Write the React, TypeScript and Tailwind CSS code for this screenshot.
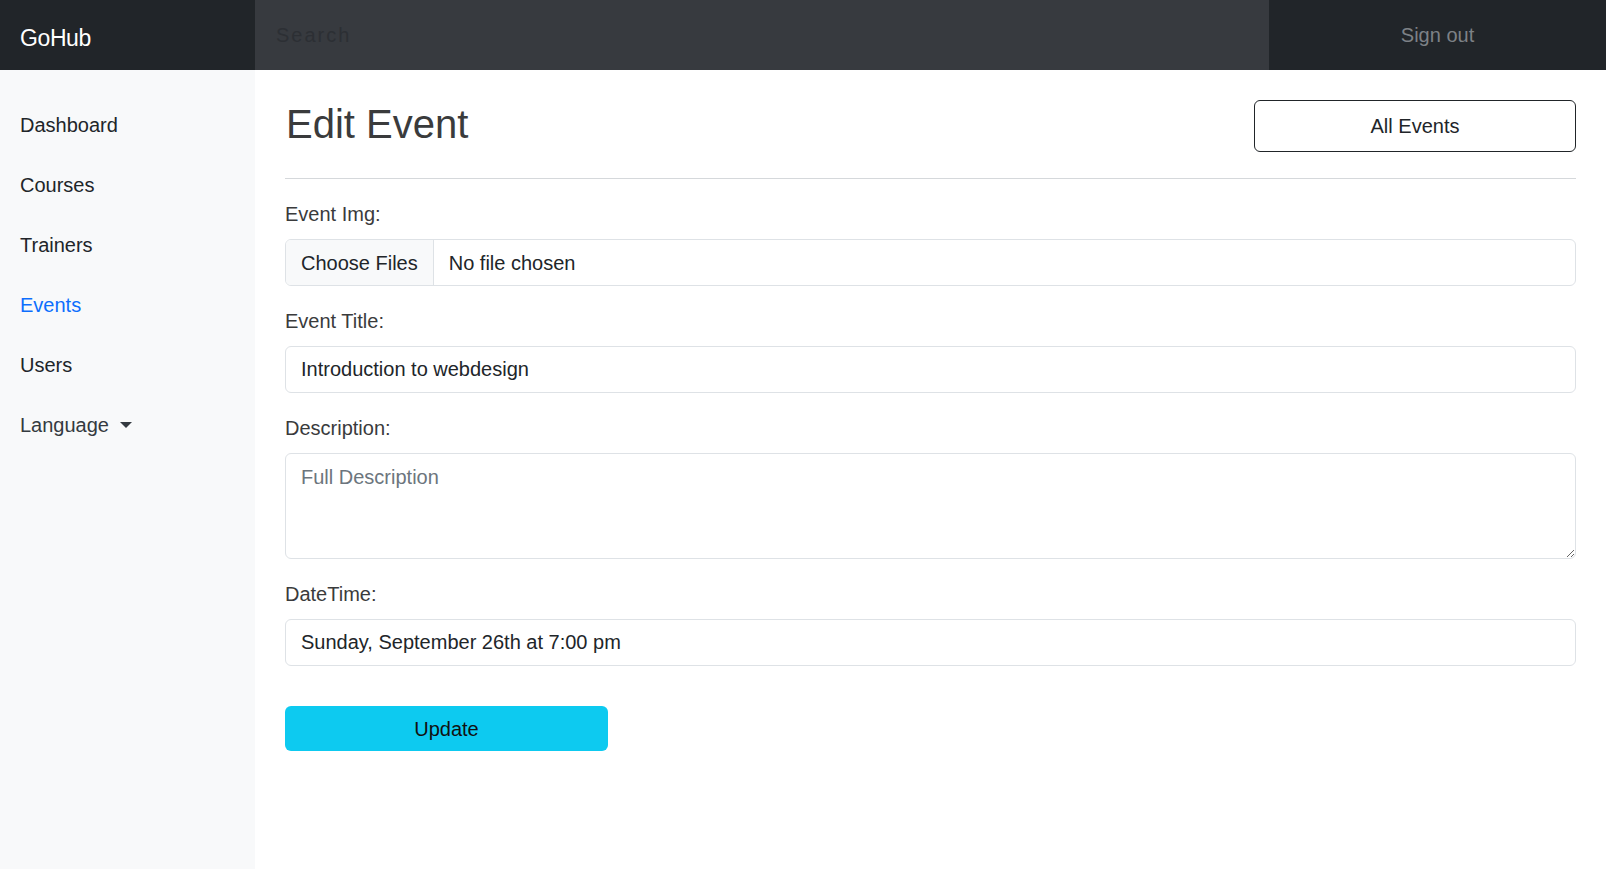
import { useState } from "react";

const navItems = [
  { label: "Dashboard", active: false },
  { label: "Courses", active: false },
  { label: "Trainers", active: false },
  { label: "Events", active: true },
  { label: "Users", active: false }
];

const inputCls =
  "block h-[47px] w-full rounded-[6px] border border-[#dee2e6] bg-white px-[15px] text-[20px] leading-[30px] text-[#212529] outline-none";

export default function App() {
  const [title, setTitle] = useState("Introduction to webdesign");
  const [when, setWhen] = useState("Sunday, September 26th at 7:00 pm");

  return (
    <div className="min-h-screen bg-white font-['Liberation_Sans',Arial,sans-serif] text-[#212529]">
      <header className="flex h-[70px] bg-[#212529]">
        <div className="flex w-[255px] shrink-0 items-center px-[20px] pt-[6px] text-[23px] tracking-[-0.4px] text-white">GoHub</div>
        <input
          placeholder="Search"
          className="h-full flex-1 bg-[#373a3f] px-[21px] text-[20px] tracking-[2px] text-white outline-none placeholder:text-[#2c2f34]"
        />
        <div className="flex w-[337px] shrink-0 items-center justify-center text-[20px] text-[#7d8186]">Sign out</div>
      </header>

      <div className="flex min-h-[799px]">
        <aside className="w-[255px] shrink-0 bg-[#f8f9fa] pt-[25px]">
          <nav className="flex flex-col">
            {navItems.map((item) => (
              <a
                key={item.label}
                className={`flex h-[60px] items-center px-[20px] text-[20px] ${item.active ? "text-[#0d6efd]" : "text-[#212529]"}`}
              >
                {item.label}
              </a>
            ))}
            <a className="flex h-[60px] items-center px-[20px] text-[20px] text-[#343a40]">
              Language
              <span className="ml-[11px] h-0 w-0 border-x-[6px] border-t-[6px] border-x-transparent border-t-[#343a40]" />
            </a>
          </nav>
        </aside>

        <main className="min-w-0 flex-1 px-[30px]">
          <div className="flex items-center justify-between border-b border-[#d5d8db] pt-[30px] pb-[26px]">
            <h1 className="mb-[4px] pl-[1px] text-[40px] leading-[48px] text-[#3a3b3c]">Edit Event</h1>
            <button className="h-[52px] w-[322px] rounded-[6px] border border-[#212529] bg-white text-[20px] text-[#212529]">
              All Events
            </button>
          </div>

          <form className="pt-[20px]" onSubmit={(e) => e.preventDefault()}>
            <label className="mb-[10px] block text-[20px] leading-[30px] text-[#3a3b3c]">Event Img:</label>
            <div className="flex h-[47px] w-full overflow-hidden rounded-[6px] border border-[#dee2e6] bg-white text-[20px] text-[#212529]">
              <span className="flex items-center border-r border-[#dee2e6] bg-[#f8f9fa] px-[15px]">Choose Files</span>
              <span className="flex items-center px-[15px]">No file chosen</span>
            </div>

            <label className="mt-[20px] mb-[10px] block text-[20px] leading-[30px] text-[#3a3b3c]">Event Title:</label>
            <input className={inputCls} value={title} onChange={(e) => setTitle(e.target.value)} />

            <label className="mt-[20px] mb-[10px] block text-[20px] leading-[30px] text-[#3a3b3c]">Description:</label>
            <textarea
              placeholder="Full Description"
              className="block h-[106px] w-full rounded-[6px] border border-[#dee2e6] bg-white px-[15px] py-[7.5px] text-[20px] leading-[30px] text-[#212529] outline-none placeholder:text-[#6c757d]"
            />

            <label className="mt-[20px] mb-[10px] block text-[20px] leading-[30px] text-[#3a3b3c]">DateTime:</label>
            <input className={inputCls} value={when} onChange={(e) => setWhen(e.target.value)} />

            <button className="mt-[40px] h-[45px] w-[323px] rounded-[6px] bg-[#0dcaf0] text-[20px] text-[#111]">Update</button>
          </form>
        </main>
      </div>
    </div>
  );
}
